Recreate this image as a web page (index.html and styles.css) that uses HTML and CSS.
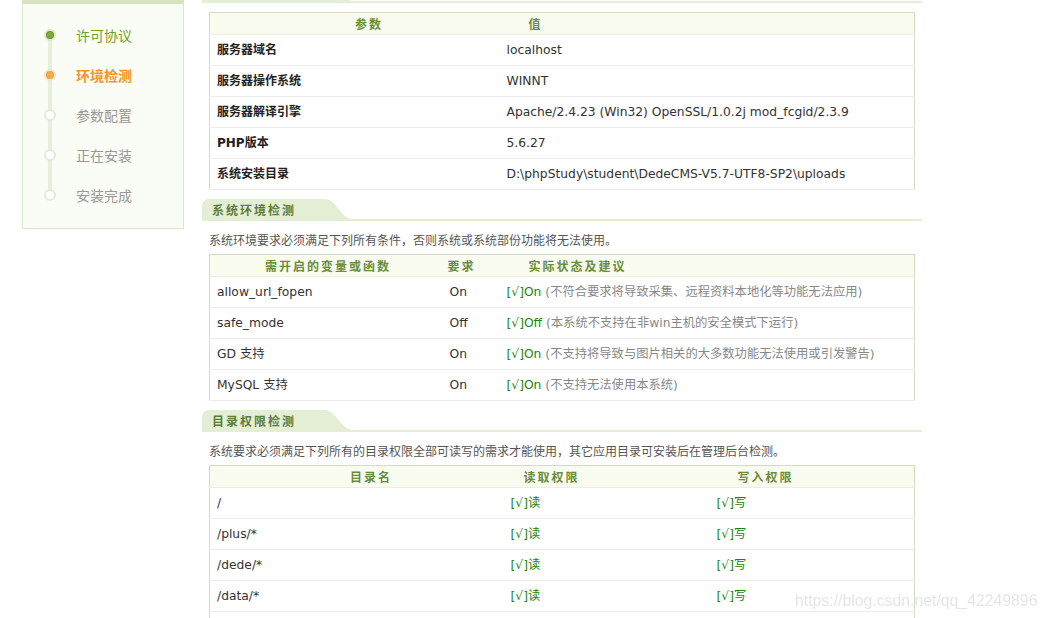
FILE: index.html
```html
<!DOCTYPE html>
<html lang="zh-CN">
<head>
<meta charset="utf-8">
<title>DedeCMS 安装 - 环境检测</title>
<link rel="stylesheet" href="styles.css">
</head>
<body>
<div class="page">
  <aside class="side">
    <ul class="steps">
      <li class="step done">许可协议</li>
      <li class="step now">环境检测</li>
      <li class="step">参数配置</li>
      <li class="step">正在安装</li>
      <li class="step">安装完成</li>
    </ul>
  </aside>
  <main class="main">
    <section class="sec sec-first">
      <div class="sec-head">
        <span class="tab">服务器信息</span>
        <svg class="tab-curve" viewBox="0 0 30 22" preserveAspectRatio="none"><path d="M0 0 C14 0 15 20 30 20 L30 22 L0 22 Z" fill="#e3eed4"/></svg>
        <span class="sec-line"></span>
      </div>
      <table class="tb tb1">
        <colgroup><col class="w290"><col></colgroup>
        <thead><tr><th class="p145">参数</th><th class="p29">值</th></tr></thead>
        <tbody>
          <tr><td class="key">服务器域名</td><td>localhost</td></tr>
          <tr><td class="key">服务器操作系统</td><td>WINNT</td></tr>
          <tr><td class="key">服务器解译引擎</td><td>Apache/2.4.23 (Win32) OpenSSL/1.0.2j mod_fcgid/2.3.9</td></tr>
          <tr><td class="key">PHP版本</td><td>5.6.27</td></tr>
          <tr><td class="key">系统安装目录</td><td>D:\phpStudy\student\DedeCMS-V5.7-UTF8-SP2\uploads</td></tr>
        </tbody>
      </table>
    </section>

    <section class="sec">
      <div class="sec-head">
        <span class="tab">系统环境检测</span>
        <svg class="tab-curve" viewBox="0 0 30 22" preserveAspectRatio="none"><path d="M0 0 C14 0 15 20 30 20 L30 22 L0 22 Z" fill="#e3eed4"/></svg>
        <span class="sec-line"></span>
      </div>
      <p class="desc">系统环境要求必须满足下列所有条件，否则系统或系统部份功能将无法使用。</p>
      <table class="tb tb2">
        <colgroup><col class="w233"><col class="w57"><col></colgroup>
        <thead><tr><th class="p55">需开启的变量或函数</th><th class="p5">要求</th><th class="p29">实际状态及建议</th></tr></thead>
        <tbody>
          <tr><td>allow_url_fopen</td><td>On</td><td><span class="ok">[√]On</span> <span class="note">(不符合要求将导致采集、远程资料本地化等功能无法应用)</span></td></tr>
          <tr><td>safe_mode</td><td>Off</td><td><span class="ok">[√]Off</span> <span class="note">(本系统不支持在非win主机的安全模式下运行)</span></td></tr>
          <tr><td>GD 支持</td><td>On</td><td><span class="ok">[√]On</span> <span class="note">(不支持将导致与图片相关的大多数功能无法使用或引发警告)</span></td></tr>
          <tr><td>MySQL 支持</td><td>On</td><td><span class="ok">[√]On</span> <span class="note">(不支持无法使用本系统)</span></td></tr>
        </tbody>
      </table>
    </section>

    <section class="sec">
      <div class="sec-head">
        <span class="tab">目录权限检测</span>
        <svg class="tab-curve" viewBox="0 0 30 22" preserveAspectRatio="none"><path d="M0 0 C14 0 15 20 30 20 L30 22 L0 22 Z" fill="#e3eed4"/></svg>
        <span class="sec-line"></span>
      </div>
      <p class="desc">系统要求必须满足下列所有的目录权限全部可读写的需求才能使用，其它应用目录可安装后在管理后台检测。</p>
      <table class="tb tb3">
        <colgroup><col class="w294"><col class="w206"><col></colgroup>
        <thead><tr><th class="p140">目录名</th><th class="p20">读取权限</th><th class="p28">写入权限</th></tr></thead>
        <tbody>
          <tr><td>/</td><td><span class="ok">[√]读</span></td><td><span class="ok">[√]写</span></td></tr>
          <tr><td>/plus/*</td><td><span class="ok">[√]读</span></td><td><span class="ok">[√]写</span></td></tr>
          <tr><td>/dede/*</td><td><span class="ok">[√]读</span></td><td><span class="ok">[√]写</span></td></tr>
          <tr><td>/data/*</td><td><span class="ok">[√]读</span></td><td><span class="ok">[√]写</span></td></tr>
          <tr><td>/a/*</td><td><span class="ok">[√]读</span></td><td><span class="ok">[√]写</span></td></tr>
          <tr><td>/install</td><td><span class="ok">[√]读</span></td><td><span class="ok">[√]写</span></td></tr>
        </tbody>
      </table>
    </section>
  </main>
</div>
<div class="watermark">https://blog.csdn.net/qq_42249896</div>
</body>
</html>
```

FILE: styles.css
```css
*, *::before, *::after { box-sizing: border-box; }
html, body { margin: 0; padding: 0; background: #fff; }
body {
  font-family: "DejaVu Sans", "Noto Sans CJK SC", sans-serif;
  font-size: 12px;
  line-height: 1.5;
  color: #333;
  overflow: hidden;
  height: 618px;
}

.page { display: flex; align-items: flex-start; padding-left: 22px; }

/* sidebar steps */
.side {
  width: 162px;
  flex: none;
  background: #fafcf6;
  border: 1px solid #dbe7cd;
  border-top: 4px solid #d5e5c0;
  padding: 11px 0 13px;
}
.steps {
  list-style: none;
  margin: 0;
  padding: 0;
  background: linear-gradient(#e6eedc, #e6eedc) no-repeat 25px 20px / 4px calc(100% - 40px);
}
.step {
  display: flex;
  align-items: center;
  height: 40px;
  padding-left: 21px;
  font-family: "Noto Sans CJK SC", sans-serif;
  font-size: 14px;
  color: #999;
}
.step::before {
  content: "";
  flex: none;
  width: 12px;
  height: 12px;
  border-radius: 50%;
  border: 2px solid #e1eadb;
  background: #fff;
  margin-right: 20px;
}
.step.done { color: #72a02c; }
.step.done::before { background: #80a83e; border-color: #dde8cf; box-shadow: inset 0 0 0 1px #6a9428; }
.step.now { color: #f7941d; font-weight: bold; }
.step.now::before { background: #f6ab4a; border-color: #efe6cf; box-shadow: inset 0 0 0 1px #f0a040; }

/* main column */
.main { width: 720px; flex: none; margin-left: 18px; }
.sec { margin-top: 9px; }
.sec-first { margin-top: -19px; }

.sec-head { display: flex; height: 22px; }
.tab {
  flex: none;
  width: 122px;
  height: 22px;
  background: #e3eed4;
  border-radius: 7px 0 0 0;
  padding-left: 10px;
  font-family: "Noto Sans CJK SC", sans-serif;
  font-weight: bold;
  font-size: 12px;
  letter-spacing: 2px;
  line-height: 22px;
  color: #5e7d3a;
  white-space: nowrap;
}
.tab-curve { flex: none; width: 30px; height: 22px; display: block; }
.sec-line { flex: 1; align-self: flex-end; height: 2px; background: #e3eed4; }

.desc {
  margin: 9px 0 0 7px;
  line-height: 20px;
  color: #555;
  font-family: "Noto Sans CJK SC", sans-serif;
}

/* tables */
.tb {
  width: 706px;
  margin: 4px 7px 0;
  border-collapse: collapse;
  table-layout: fixed;
  border: 1px solid #cfdcc2;
}
.sec-first .tb { margin-top: 9px; }
.tb th {
  height: 22px;
  padding: 0;
  background: #f8fbee;
  color: #6a8c3c;
  font-family: "Noto Sans CJK SC", sans-serif;
  font-weight: bold;
  font-size: 12px;
  letter-spacing: 2px;
  text-align: left;
  border-bottom: 1px solid #e9f0dd;
  white-space: nowrap;
}
.tb td {
  height: 31px;
  padding: 0 7px;
  border-bottom: 1px solid #ececec;
  white-space: nowrap;
  vertical-align: middle;
  font-size: 12.3px;
}
.tb td.key { font-weight: bold; color: #222; font-size: 12px; }

.w290 { width: 290px; }
.w233 { width: 233px; }
.w57 { width: 57px; }
.w294 { width: 294px; }
.w206 { width: 206px; }

.p145 { padding-left: 145px !important; }
.p29 { padding-left: 29px !important; }
.p55 { padding-left: 55px !important; }
.p5 { padding-left: 5px !important; }
.p140 { padding-left: 140px !important; }
.p20 { padding-left: 20px !important; }
.p28 { padding-left: 28px !important; }

.ok { color: #1a850c; }
.note { color: #888; }

.watermark {
  position: fixed;
  left: 795px;
  top: 589px;
  font-family: "Liberation Sans", Arial, sans-serif;
  font-size: 15.8px;
  color: rgba(0, 0, 0, 0.11);
  white-space: nowrap;
  pointer-events: none;
}
```
